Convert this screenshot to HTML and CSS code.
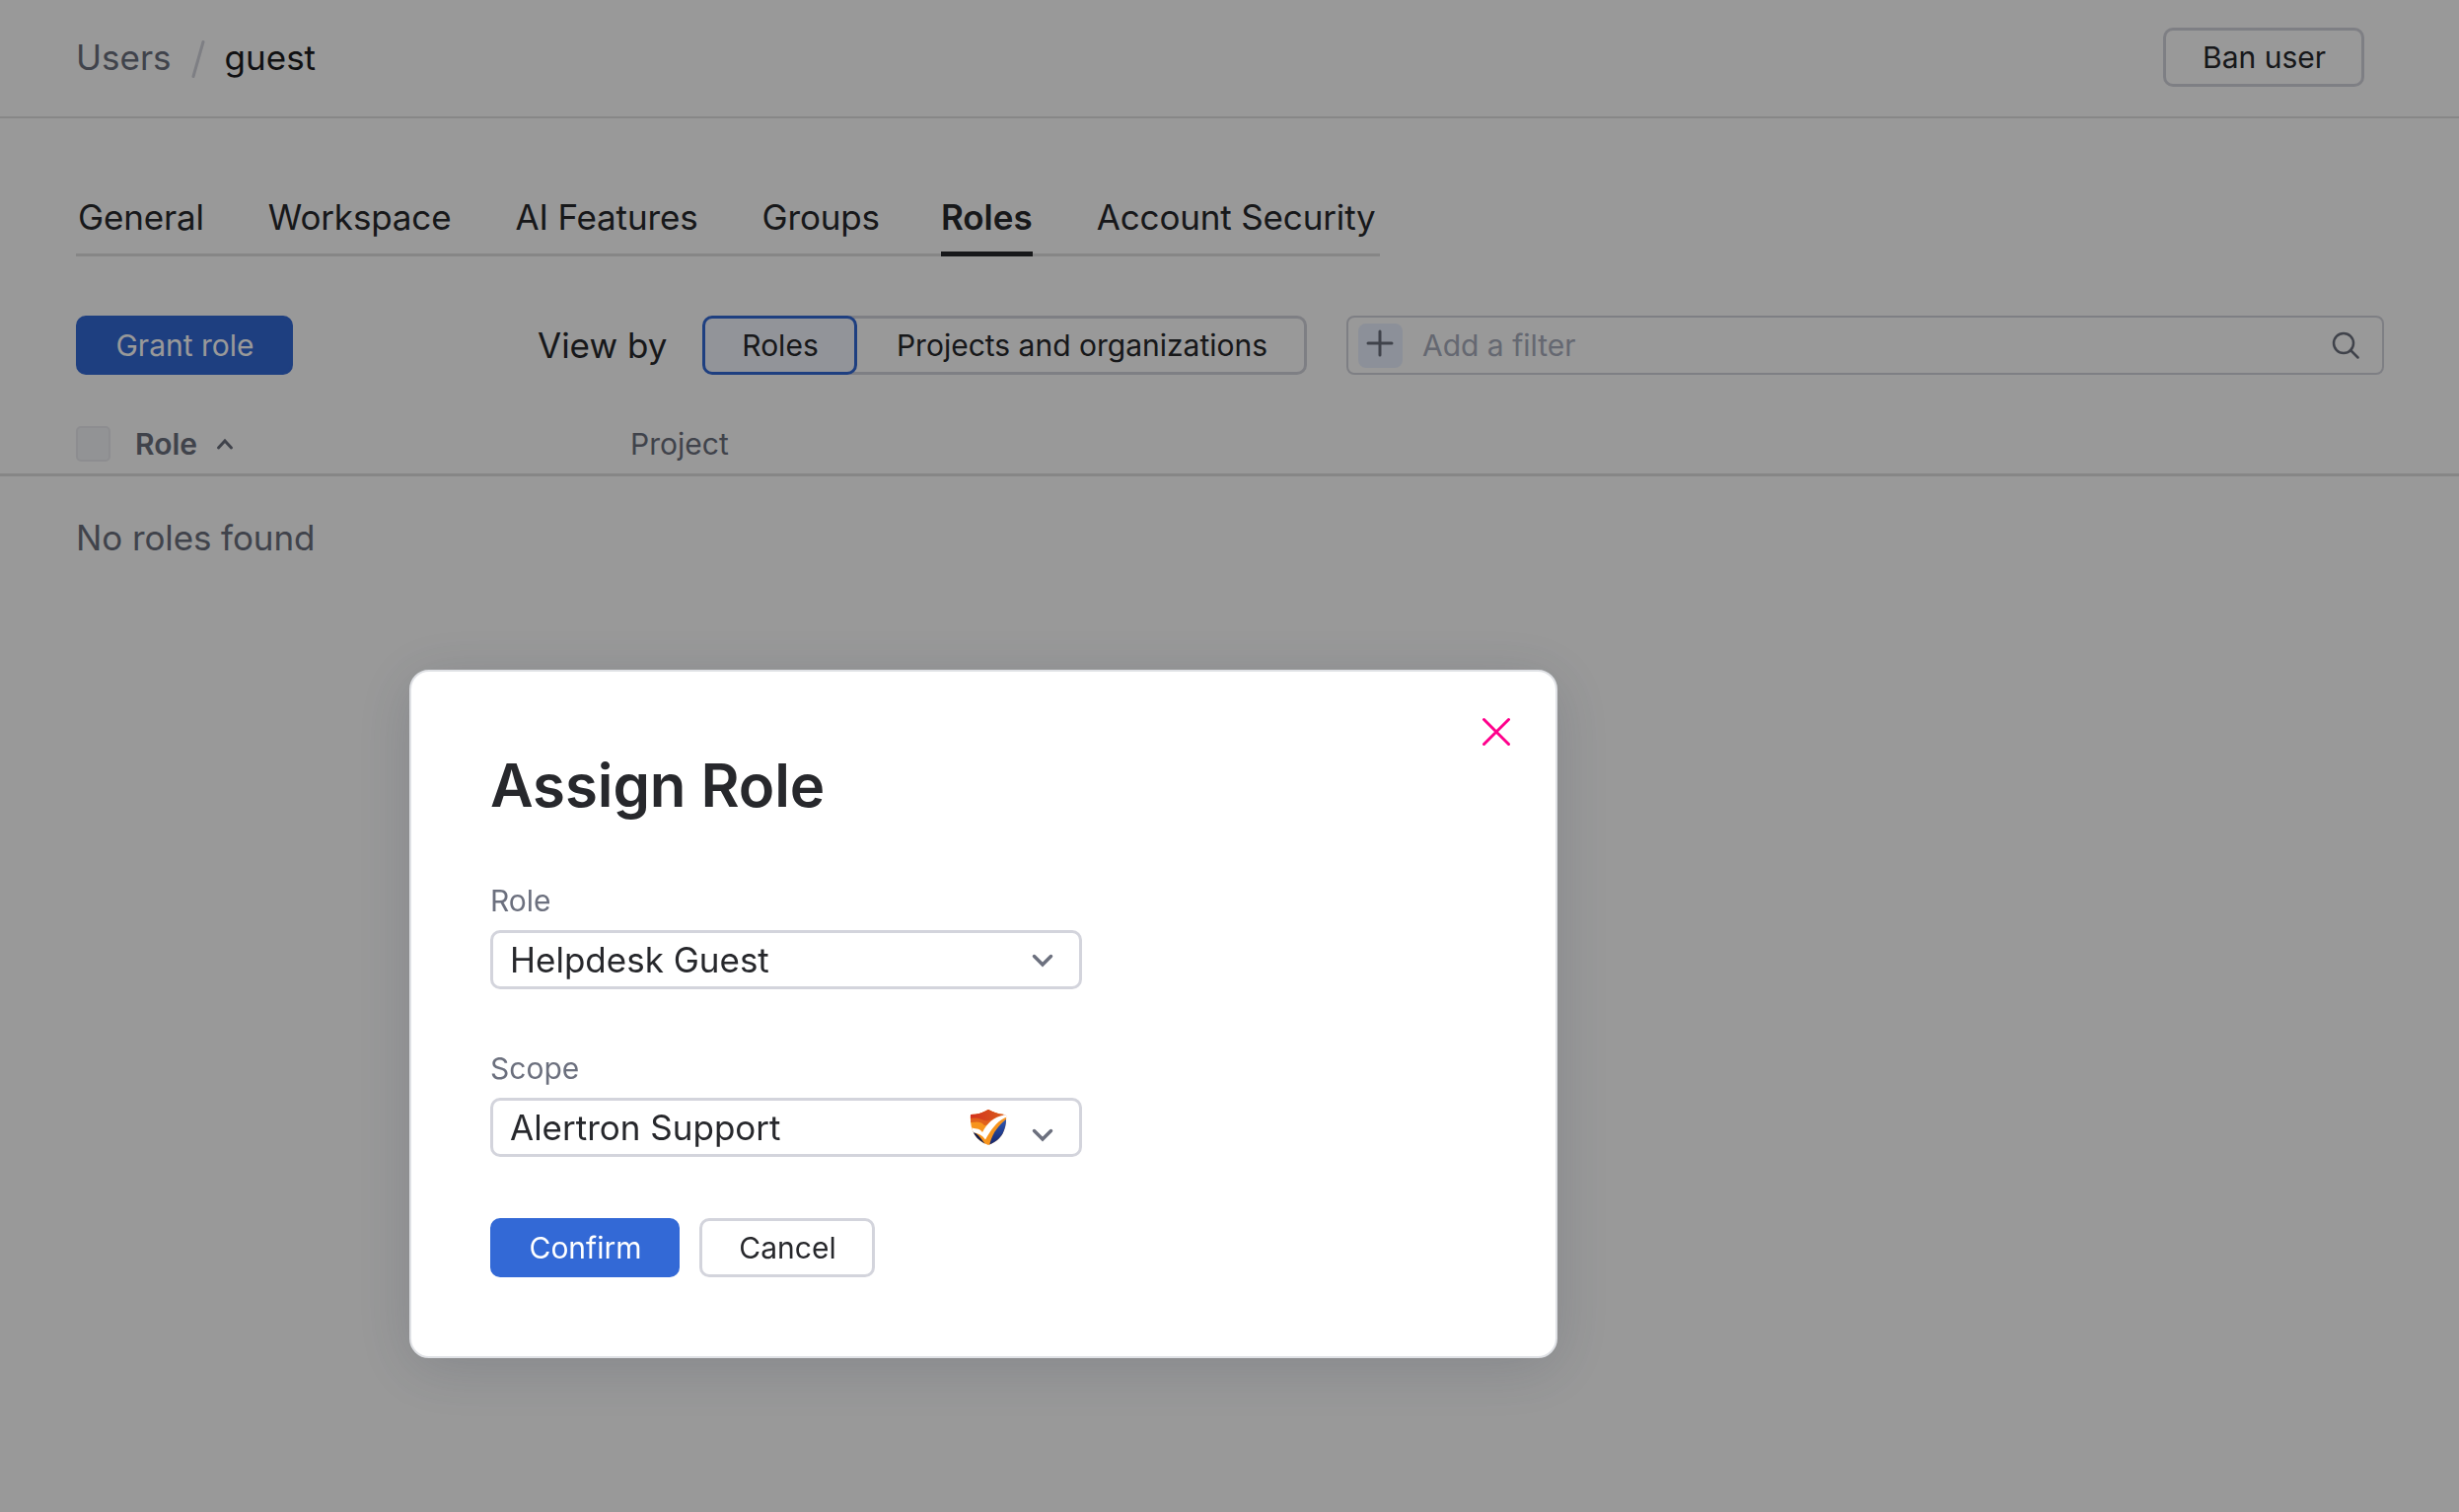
FILE: index.html
```html
<!DOCTYPE html>
<html lang="en">
<head>
    <meta charset="UTF-8">
    <meta name="viewport" content="width=device-width, initial-scale=1.0">
    <title>guest - Users</title>
    <link rel="stylesheet" href="styles.css">
</head>
<body>
    <header class="header">
        <div class="crumbs">
            <a class="crumb">Users</a>
            <svg class="slash" width="14" height="38" viewBox="0 0 14 38"><path d="M12 1.5L2 36.5"/></svg>
            <span class="current">guest</span>
        </div>
        <button class="btn">Ban user</button>
    </header>
    <main>
        <nav class="tabs">
            <a class="tab">General</a>
            <a class="tab">Workspace</a>
            <a class="tab">AI Features</a>
            <a class="tab">Groups</a>
            <a class="tab active">Roles</a>
            <a class="tab">Account Security</a>
        </nav>
        <div class="toolbar">
            <button class="btn primary grant">Grant role</button>
            <span class="view-by">View by</span>
            <div class="group">
                <button class="btn selected">Roles</button>
                <button class="btn rest">Projects and organizations</button>
            </div>
            <div class="filter">
                <span class="plus">
                    <svg width="28" height="28" viewBox="0 0 28 28"><path d="M14 2v24M2 14h24"/></svg>
                </span>
                <span class="placeholder">Add a filter</span>
                <svg class="search" width="28" height="28" viewBox="0 0 28 28"><circle cx="12" cy="12" r="10"/><path d="M19 19l7.5 7.5"/></svg>
            </div>
        </div>
        <div class="table-head">
            <span class="checkbox"></span>
            <span class="col-role">Role</span>
            <svg class="sort" width="18" height="14" viewBox="0 0 18 14"><path d="M2.5 11L9 4l6.5 7"/></svg>
            <span class="col-project">Project</span>
        </div>
        <p class="empty">No roles found</p>
    </main>

    <!-- dialog -->
    <div class="overlay">
        <div class="dialog">
            <svg class="close" width="32" height="32" viewBox="0 0 32 32"><path d="M3.5 3.5l25 25M28.5 3.5l-25 25"/></svg>
            <h1 class="title">Assign Role</h1>
            <div class="label">Role</div>
            <div class="select">
                <span class="value">Helpdesk Guest</span>
                <svg class="arrow" width="22" height="14" viewBox="0 0 22 14"><path d="M2.5 2.5L11 11l8.5-8.5"/></svg>
            </div>
            <div class="label">Scope</div>
            <div class="select">
                <span class="value">Alertron Support</span>
                <svg class="shield" width="38" height="38" viewBox="0 0 38 38">
                    <defs>
                        <linearGradient id="top" x1="0" y1="0" x2="1" y2="0">
                            <stop offset="0" stop-color="#d3301f"/>
                            <stop offset="1" stop-color="#d9601c"/>
                        </linearGradient>
                        <linearGradient id="blue" x1="0" y1="0" x2="0" y2="1">
                            <stop offset="0" stop-color="#2f58b4"/>
                            <stop offset="1" stop-color="#14246a"/>
                        </linearGradient>
                        <clipPath id="shape">
                            <path d="M1 6C8 6 14 4 19 1c5 3 11 5 18 5 1 15-4 26-18 31C5 32 0 21 1 6z"/>
                        </clipPath>
                    </defs>
                    <g clip-path="url(#shape)">
                        <path fill="#f7941d" d="M0 0h38v38H0z"/>
                        <path fill="#e0601c" d="M0 0h38v8C27 9 21 17 15 17 11 12 6 14 1 14z"/>
                        <path fill="url(#top)" d="M0 0h38v6c-8 0-13 4-18 6C14 14 12 8 1 10z"/>
                        <path fill="#0f1c4d" d="M2 23c5 1 9 6 15 15L4 34z"/>
                        <path fill="url(#blue)" d="M38 10v28H20c2-11 8-20 18-28z"/>
                        <path fill="#fff" d="M2 19.5c3 1 8 0 11 4.500C18 14 26 7 38 6v2.500C28 12 22 21 16 31.500 13 27 9 25 3 24z"/>
                    </g>
                </svg>
                <svg class="arrow low" width="22" height="14" viewBox="0 0 22 14"><path d="M2.5 2.5L11 11l8.5-8.5"/></svg>
            </div>
            <div class="buttons">
                <button class="btn primary confirm">Confirm</button>
                <button class="btn cancel">Cancel</button>
            </div>
        </div>
    </div>
</body>
</html>
```
FILE: styles.css
```css
* {
    box-sizing: border-box;
}

body {
    margin: 0;
    height: 1533px;
    overflow: hidden;
    background-color: #fff;
    color: #27282c;
    font-family: Inter, "Liberation Sans", sans-serif;
    font-size: 35px;
    line-height: 50px;
}

svg {
    flex: none;
    fill: none;
    stroke: #6c707e;
    stroke-width: 3;
    stroke-linecap: round;
}

/* buttons */
.btn {
    height: 60px;
    padding: 0 0 1px 1px;
    border: 3px solid #d3d4dc;
    border-radius: 10px;
    background-color: transparent;
    color: #27282c;
    font-family: inherit;
    font-size: 30px;
    white-space: nowrap;
}

.primary {
    border-color: #3369d6;
    background-color: #3369d6;
    color: #fff;
}

/* header */
.header {
    display: flex;
    justify-content: space-between;
    align-items: center;
    height: 120px;
    padding: 0 96px 2px 77px;
    border-bottom: 2px solid #e2e2e2;
}

.header .btn {
    width: 204px;
}

.crumbs {
    display: flex;
    align-items: center;
}

.crumb {
    color: #6c707e;
}

.slash {
    margin: 4px 20px 0 20px;
    stroke: #d3d4dc;
}

.current {
    color: #1b1c20;
}

/* tabs */
.tabs {
    display: flex;
    gap: 65px;
    width: 1322px;
    height: 65px;
    margin: 75px 0 0 77px;
    padding-left: 2px;
    border-bottom: 3px solid #e0e0e0;
    letter-spacing: -.15px;
}

.tab {
    height: 65px;
    white-space: nowrap;
}

.active {
    margin-left: -3px;
    font-weight: 600;
    letter-spacing: 0;
    border-bottom: 5px solid #27282c;
}

/* toolbar */
.toolbar {
    display: flex;
    align-items: center;
    margin: 60px 76px 0 77px;
}

.grant {
    width: 220px;
}

.view-by {
    width: 167px;
    margin-left: 248px;
}

.group {
    display: flex;
    width: 613px;
}

.selected {
    position: relative;
    width: 157px;
    border-color: #3369d6;
    background-color: #f4f7ff;
}

.rest {
    width: 466px;
    margin-left: -10px;
    padding-left: 10px;
    border-radius: 0 10px 10px 0;
}

.filter {
    display: flex;
    align-items: center;
    flex: 1;
    height: 60px;
    margin-left: 40px;
    padding: 0 23px 0 10px;
    border: 2px solid #d3d4dc;
    border-radius: 8px;
    font-size: 30px;
}

.plus {
    display: flex;
    justify-content: center;
    width: 45px;
    height: 45px;
    padding: 6px 1px 0 0;
    border-radius: 8px;
    background-color: #e9f1ff;
}

.placeholder {
    margin-left: 20px;
    color: #a8adbd;
}

.search {
    margin: 0 0 0 auto;
    stroke-width: 2.5;
}

/* table */
.table-head {
    display: flex;
    align-items: center;
    height: 103px;
    padding: 39px 0 0 77px;
    border-bottom: 3px solid #e0e0e0;
    color: #6c707e;
    font-size: 30px;
}

.checkbox {
    width: 35px;
    height: 36px;
    border: 2px solid #ebecf0;
    border-radius: 5px;
    background-color: #f4f5f8;
}

.col-role {
    margin-left: 25px;
    font-weight: 600;
}

.sort {
    margin-left: 19px;
}

.col-project {
    margin-left: 402px;
}

.empty {
    margin: 37px 0 0 77px;
    color: #6c707e;
    letter-spacing: -.1px;
}

/* dialog */
.overlay {
    position: fixed;
    inset: 0;
    padding: 679px 0 0 415px;
    background-color: rgba(0, 0, 0, .4);
}

.dialog {
    position: relative;
    width: 1164px;
    height: 698px;
    padding: 78px 80px;
    border: 2px solid #dfe1e5;
    border-radius: 20px;
    background-color: #fff;
    box-shadow: 0 10px 60px rgba(40, 50, 70, .18);
}

.close {
    position: absolute;
    top: 45px;
    right: 44px;
    stroke: #ff008c;
}

.title {
    margin: 0;
    font-size: 60px;
    font-weight: 600;
    line-height: 75px;
    letter-spacing: -.1px;
}

.label {
    height: 50px;
    margin-top: 59px;
    color: #6c707e;
    font-size: 30px;
    line-height: 40px;
}

.select {
    display: flex;
    align-items: center;
    width: 600px;
    height: 60px;
    padding: 0 26px 0 17px;
    border: 3px solid #d3d4dc;
    border-radius: 10px;
}

.value {
    flex: 1;
}

.select + .label {
    margin-top: 60px;
}

.arrow {
    margin-top: 2px;
    stroke-width: 3.5;
}

.low {
    margin-top: 16px;
}

.shield {
    margin-right: 25px;
    stroke: none;
}

.buttons {
    display: flex;
    gap: 20px;
    margin-top: 62px;
}

.confirm {
    width: 192px;
}

.cancel {
    width: 178px;
}
```
